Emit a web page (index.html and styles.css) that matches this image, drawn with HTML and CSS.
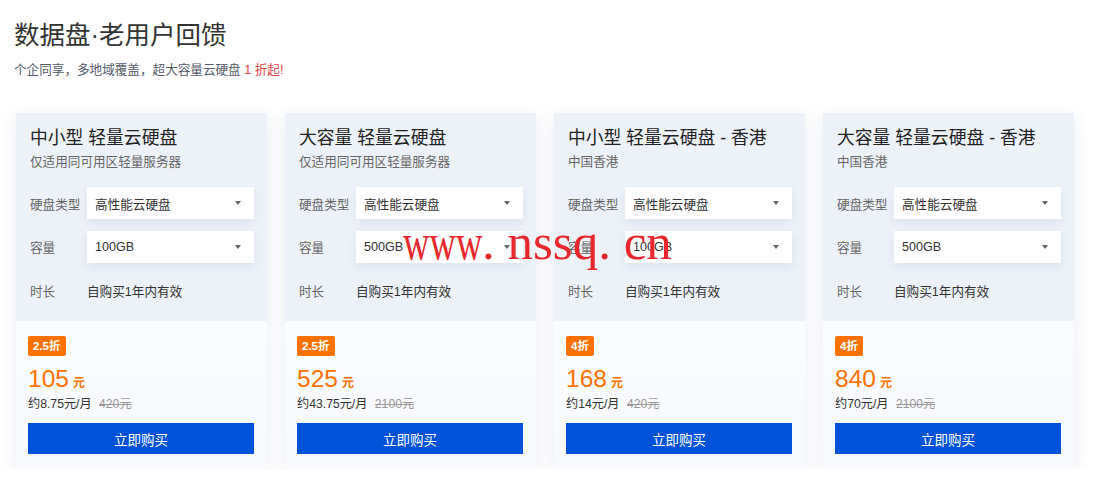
FILE: index.html
```html
<!DOCTYPE html>
<html lang="zh-CN">
<head>
  <meta charset="UTF-8" />
  <meta name="viewport" content="width=device-width, initial-scale=1.0" />
  <title>数据盘·老用户回馈</title>
  <link rel="stylesheet" href="styles.css">
</head>
<body>
<main class="page">
  <h1 class="page-title">数据盘·老用户回馈</h1>
  <p class="page-desc">个企同享，多地域覆盖，超大容量云硬盘 <span class="hot">1 折起!</span></p>

  <div class="cards">
    <div class="card">
      <div class="card-top">
        <h2 class="card-title">中小型 轻量云硬盘</h2>
        <p class="card-sub">仅适用同可用区轻量服务器</p>
        <div class="row">
          <span class="row-label">硬盘类型</span>
          <div class="select">高性能云硬盘<i class="arrow"></i></div>
        </div>
        <div class="row">
          <span class="row-label">容量</span>
          <div class="select">100GB<i class="arrow"></i></div>
        </div>
        <div class="row">
          <span class="row-label">时长</span>
          <span class="row-value">自购买1年内有效</span>
        </div>
      </div>
      <div class="card-bottom">
        <span class="badge">2.5折</span>
        <div class="price">105<span class="unit">元</span></div>
        <div class="price-note">约8.75元/月 <s class="old">420元</s></div>
        <button class="buy">立即购买</button>
      </div>
    </div>

    <div class="card">
      <div class="card-top">
        <h2 class="card-title">大容量 轻量云硬盘</h2>
        <p class="card-sub">仅适用同可用区轻量服务器</p>
        <div class="row">
          <span class="row-label">硬盘类型</span>
          <div class="select">高性能云硬盘<i class="arrow"></i></div>
        </div>
        <div class="row">
          <span class="row-label">容量</span>
          <div class="select">500GB<i class="arrow"></i></div>
        </div>
        <div class="row">
          <span class="row-label">时长</span>
          <span class="row-value">自购买1年内有效</span>
        </div>
      </div>
      <div class="card-bottom">
        <span class="badge">2.5折</span>
        <div class="price">525<span class="unit">元</span></div>
        <div class="price-note">约43.75元/月 <s class="old">2100元</s></div>
        <button class="buy">立即购买</button>
      </div>
    </div>

    <div class="card">
      <div class="card-top">
        <h2 class="card-title">中小型 轻量云硬盘 - 香港</h2>
        <p class="card-sub">中国香港</p>
        <div class="row">
          <span class="row-label">硬盘类型</span>
          <div class="select">高性能云硬盘<i class="arrow"></i></div>
        </div>
        <div class="row">
          <span class="row-label">容量</span>
          <div class="select">100GB<i class="arrow"></i></div>
        </div>
        <div class="row">
          <span class="row-label">时长</span>
          <span class="row-value">自购买1年内有效</span>
        </div>
      </div>
      <div class="card-bottom">
        <span class="badge">4折</span>
        <div class="price">168<span class="unit">元</span></div>
        <div class="price-note">约14元/月 <s class="old">420元</s></div>
        <button class="buy">立即购买</button>
      </div>
    </div>

    <div class="card">
      <div class="card-top">
        <h2 class="card-title">大容量 轻量云硬盘 - 香港</h2>
        <p class="card-sub">中国香港</p>
        <div class="row">
          <span class="row-label">硬盘类型</span>
          <div class="select">高性能云硬盘<i class="arrow"></i></div>
        </div>
        <div class="row">
          <span class="row-label">容量</span>
          <div class="select">500GB<i class="arrow"></i></div>
        </div>
        <div class="row">
          <span class="row-label">时长</span>
          <span class="row-value">自购买1年内有效</span>
        </div>
      </div>
      <div class="card-bottom">
        <span class="badge">4折</span>
        <div class="price">840<span class="unit">元</span></div>
        <div class="price-note">约70元/月 <s class="old">2100元</s></div>
        <button class="buy">立即购买</button>
      </div>
    </div>
  </div>

  <div class="watermark"><span class="ww"><span>www</span></span>. nssq. cn</div>
</main>
</body>
</html>
```

FILE: styles.css
```css
body {
  margin: 0;
  background: #fff;
  font-family: "Liberation Sans", "Noto Sans CJK SC", sans-serif;
  color: #333;
}

.page {
  position: relative;
  padding: 17px 14px 0;
}

.page-title {
  margin: 0;
  font-size: 25.5px;
  font-weight: 400;
  line-height: 36px;
  color: #333;
}

.page-desc {
  margin: 7px 0 0;
  font-size: 12.6px;
  line-height: 20px;
  color: #555b6b;
}

.page-desc .hot {
  color: #e54545;
}

.cards {
  display: flex;
  gap: 18px;
  margin: 33px 0 0 2px;
}

.card {
  width: 251px;
  box-shadow: 0 4px 16px rgba(40, 70, 130, 0.1);
  background: #fafbfd;
}

.card-top {
  background: #edf1f8;
  padding: 13px 13px 15px 14px;
}

.card-title {
  margin: 0;
  font-size: 17.8px;
  font-weight: 400;
  line-height: 24px;
  color: #222;
}

.card-sub {
  margin: 2px 0 15px;
  font-size: 12.6px;
  line-height: 20px;
  color: #666;
}

.row {
  display: flex;
  align-items: center;
  height: 32px;
  font-size: 12.6px;
}

.row + .row {
  margin-top: 11.5px;
}

.row-label {
  width: 57px;
  color: #666;
}

.row-value {
  color: #333;
}

.select {
  flex: 1;
  display: flex;
  align-items: center;
  justify-content: space-between;
  height: 32px;
  padding: 0 13px 0 8px;
  background: #fff;
  color: #333;
  box-shadow: 0 4px 10px rgba(40, 70, 130, 0.08);
}

.arrow {
  width: 0;
  height: 0;
  border-left: 3.5px solid transparent;
  border-right: 3.5px solid transparent;
  border-top: 4px solid #666;
}

.card-bottom {
  padding: 15px 13px 15px 12px;
  background: linear-gradient(#fbfcfe, #f7f9fc);
}

.badge {
  display: block;
  width: fit-content;
  height: 20px;
  line-height: 20px;
  padding: 0 5px;
  background: #ff7200;
  color: #fff;
  font-size: 11.5px;
  font-weight: bold;
  border-radius: 2px;
}

.price {
  height: 28px;
  margin-top: 9px;
  font-size: 24.5px;
  line-height: 28px;
  color: #ff7200;
}

.price .unit {
  margin-left: 4px;
  font-size: 12px;
  font-weight: bold;
  line-height: 1;
}

.price-note {
  height: 18px;
  margin-top: 2px;
  font-size: 12.2px;
  line-height: 18px;
  color: #333;
}

.price-note .old {
  margin-left: 4px;
  color: #999;
}

.buy {
  display: block;
  width: 100%;
  height: 31px;
  margin-top: 10px;
  border: none;
  background: #0052d9;
  color: #fff;
  font-family: inherit;
  font-size: 13.5px;
  cursor: pointer;
}

.watermark {
  position: absolute;
  left: 403px;
  top: 217px;
  font-family: "Liberation Serif", serif;
  font-size: 51px;
  line-height: 51px;
  color: #e8282d;
  white-space: pre;
  pointer-events: none;
}

.watermark .ww {
  display: inline-block;
  width: 79px;
}

.watermark .ww span {
  display: inline-block;
  transform: scaleX(0.72);
  transform-origin: left;
}
```
